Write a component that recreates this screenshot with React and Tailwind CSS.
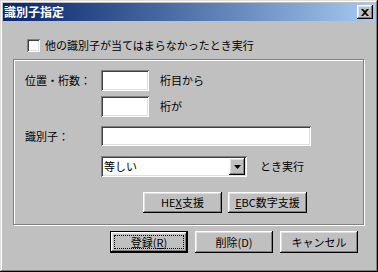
const font = "font-['Noto_Sans_CJK_JP','Liberation_Sans',sans-serif]";
const raised = 'bg-[#c0c0c0] shadow-[inset_-1px_-1px_#000,inset_1px_1px_#fff,inset_-2px_-2px_#808080,inset_2px_2px_#dfdfdf]';
const sunken = 'bg-white shadow-[inset_1px_1px_#808080,inset_-1px_-1px_#fff,inset_2px_2px_#404040,inset_-2px_-2px_#dfdfdf]';

function Btn({ children, w = 'w-[79px]', h = 'h-[21px]' }) {
  return (
    <div className={`${w} ${h} ${raised} flex items-center justify-center text-[11px] leading-none text-black`}>
      {children}
    </div>
  );
}

function Field({ className }) {
  return <div className={`${sunken} ${className}`} />;
}

export default function App() {
  return (
    <div className={`w-[378px] h-[272px] bg-[#c0c0c0] p-[3px] shadow-[inset_-1px_-1px_#000,inset_1px_1px_#dfdfdf,inset_-2px_-2px_#808080,inset_2px_2px_#fff] ${font}`}>
      {/* title bar */}
      <div className="h-[18px] flex items-center justify-between pl-[1px] pr-[2px] bg-gradient-to-r from-[#0a246a] to-[#a6caf0]">
        <span className="text-white text-[12px] font-bold leading-none">識別子指定</span>
        <div className={`w-[16px] h-[14px] ${raised} flex items-center justify-center`}>
          <svg width="8" height="7" viewBox="0 0 8 7">
            <path d="M0 0h2l2 2 2-2h2L5 3.5 8 7H6L4 5 2 7H0l3-3.5z" fill="#000" />
          </svg>
        </div>
      </div>

      {/* checkbox row */}
      <div className="mt-[18px] ml-[24px] flex items-center">
        <div className={`w-[13px] h-[13px] ${sunken}`} />
        <span className="ml-[5px] text-[11px] leading-none text-black">他の識別子が当てはまらなかったとき実行</span>
      </div>

      {/* group box */}
      <div className="mt-[7px] ml-[10px] w-[351px] h-[166px] border border-[#808080] shadow-[inset_1px_1px_#fff,1px_1px_#fff] pl-[11px] pt-[10px] text-[11px] leading-none text-black">
        <div className="flex items-center">
          <span className="w-[76px]">位置・桁数：</span>
          <Field className="w-[48px] h-[21px]" />
          <span className="ml-[11px]">桁目から</span>
        </div>
        <div className="mt-[5px] flex items-center">
          <div className="w-[76px]" />
          <Field className="w-[48px] h-[21px]" />
          <span className="ml-[11px]">桁が</span>
        </div>
        <div className="mt-[9px] flex items-center">
          <span className="w-[76px]">識別子：</span>
          <Field className="w-[210px] h-[20px]" />
        </div>
        <div className="mt-[10px] flex items-center">
          <div className="w-[76px]" />
          <div className={`w-[146px] h-[21px] ${sunken} flex items-center justify-between pl-[3px] pr-[2px]`}>
            <span>等しい</span>
            <div className={`w-[16px] h-[17px] ${raised} flex items-center justify-center`}>
              <svg width="7" height="4" viewBox="0 0 7 4">
                <path d="M0 0h7L3.5 4z" fill="#000" />
              </svg>
            </div>
          </div>
          <span className="ml-[13px]">とき実行</span>
        </div>
        <div className="mt-[15px] ml-[118px] flex gap-[6px]">
          <Btn>HE<span className="underline">X</span>支援</Btn>
          <Btn><span className="underline">E</span>BC数字支援</Btn>
        </div>
      </div>

      {/* bottom buttons */}
      <div className="mt-[6px] ml-[107px] flex gap-[7px]">
        <div className="w-[78px] h-[22px] border border-black">
          <div className={`w-full h-full ${raised} p-[3px]`}>
            <div className="w-full h-full border border-dotted border-black flex items-center justify-center text-[11px] leading-none text-black">
              登録(<span className="underline">R</span>)
            </div>
          </div>
        </div>
        <Btn w="w-[78px]" h="h-[22px]">削除(D)</Btn>
        <Btn w="w-[78px]" h="h-[22px]">キャンセル</Btn>
      </div>
    </div>
  );
}
